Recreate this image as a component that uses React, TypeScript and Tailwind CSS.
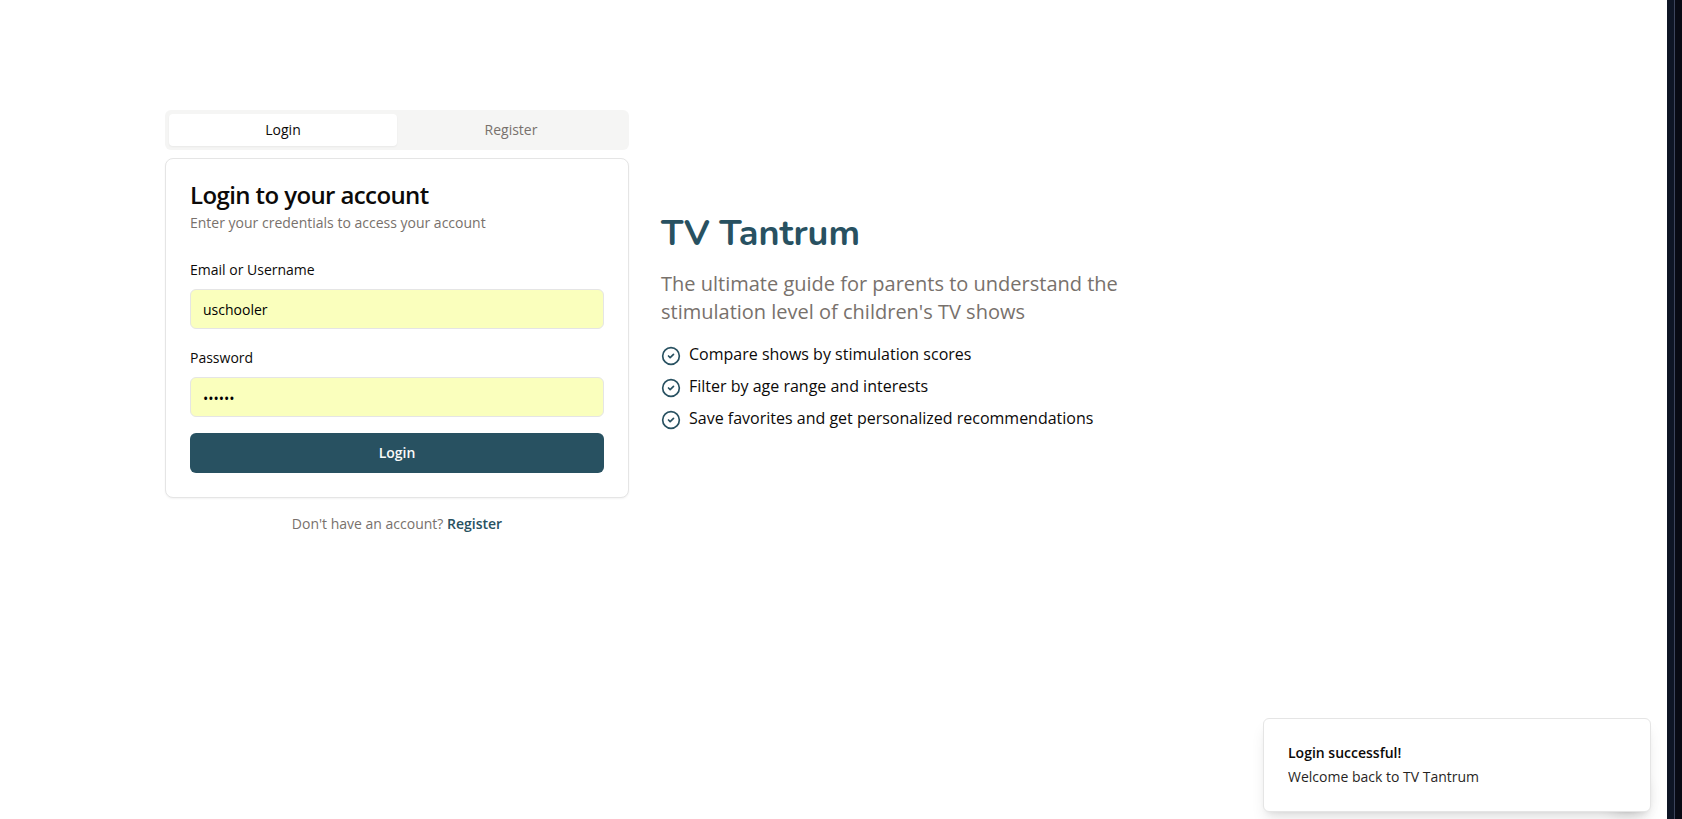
import { CircleCheck } from "lucide-react";

const features = [
  "Compare shows by stimulation scores",
  "Filter by age range and interests",
  "Save favorites and get personalized recommendations",
];

function Field({ label, type, value }: { label: string; type: string; value: string }) {
  return (
    <div className="flex flex-col gap-2">
      <label className="pt-px text-sm leading-[23px]">{label}</label>
      <input
        type={type}
        defaultValue={value}
        className="h-10 w-full rounded-md border border-[#e5e5e5] bg-[#faffbd] px-3 text-sm text-black outline-none [&[type=password]]:pt-0.5"
      />
    </div>
  );
}

function LoginPanel() {
  return (
    <div>
      <div className="grid h-10 grid-cols-2 rounded-md bg-[#f5f5f4] p-1 text-sm">
        <button className="rounded-sm bg-white text-[#0c0a09] shadow-xs">Login</button>
        <button className="text-[#78716c]">Register</button>
      </div>
      <div className="mt-2 rounded-lg border border-[#e5e5e5] bg-white shadow-xs">
        <div className="flex flex-col gap-1.5 p-6">
          <h3 className="text-2xl leading-none font-semibold tracking-tight">Login to your account</h3>
          <p className="text-sm text-[#78716c]">Enter your credentials to access your account</p>
        </div>
        <form className="flex flex-col gap-4 px-6 pb-6">
          <Field label="Email or Username" type="text" value="uschooler" />
          <Field label="Password" type="password" value="secret" />
          <button type="button" className="h-10 rounded-md bg-[#285161] text-sm font-semibold text-[#fafaf9]">
            Login
          </button>
        </form>
      </div>
      <p className="mt-4 text-center text-sm text-[#78716c]">
        Don't have an account? <a className="font-semibold text-[#285161]">Register</a>
      </p>
    </div>
  );
}

function Intro() {
  return (
    <div>
      <h1 className="mb-4 text-4xl leading-10 font-bold text-[#285161] [font-family:Nunito,Lato,sans-serif]">
        TV Tantrum
      </h1>
      <p className="mb-4 text-xl leading-7 text-[#78716c]">
        The ultimate guide for parents to understand the stimulation level of children's TV shows
      </p>
      <ul className="flex flex-col gap-2">
        {features.map((f) => (
          <li key={f} className="flex items-start">
            <CircleCheck className="mt-1 mr-2 size-5 text-[#285161]" />
            <span>{f}</span>
          </li>
        ))}
      </ul>
    </div>
  );
}

export default function App() {
  return (
    <div className="relative flex h-[819px] overflow-hidden bg-white text-[#0c0a09] [font-family:'Open_Sans',sans-serif]">
      <main className="flex-1 pt-[110px] pl-[165px]">
        <div className="grid w-[960px] grid-cols-2 items-center gap-8">
          <LoginPanel />
          <Intro />
        </div>
      </main>
      <div className="absolute top-[762px] right-[31px] size-12 rounded-full bg-white shadow-lg" />
      <div className="absolute top-[718px] right-[31px] flex h-[94px] w-[388px] flex-col gap-1 rounded-md border border-[#e5e5e5] bg-white p-6 text-sm shadow-lg">
        <div className="font-semibold">Login successful!</div>
        <div className="opacity-90">Welcome back to TV Tantrum</div>
      </div>
      <aside className="relative flex w-[15px] bg-[#0e1525]">
        <div className="ml-[7px] w-px bg-[#3c445c]" />
        <div className="flex-1 bg-[#080a14]" />
      </aside>
    </div>
  );
}
